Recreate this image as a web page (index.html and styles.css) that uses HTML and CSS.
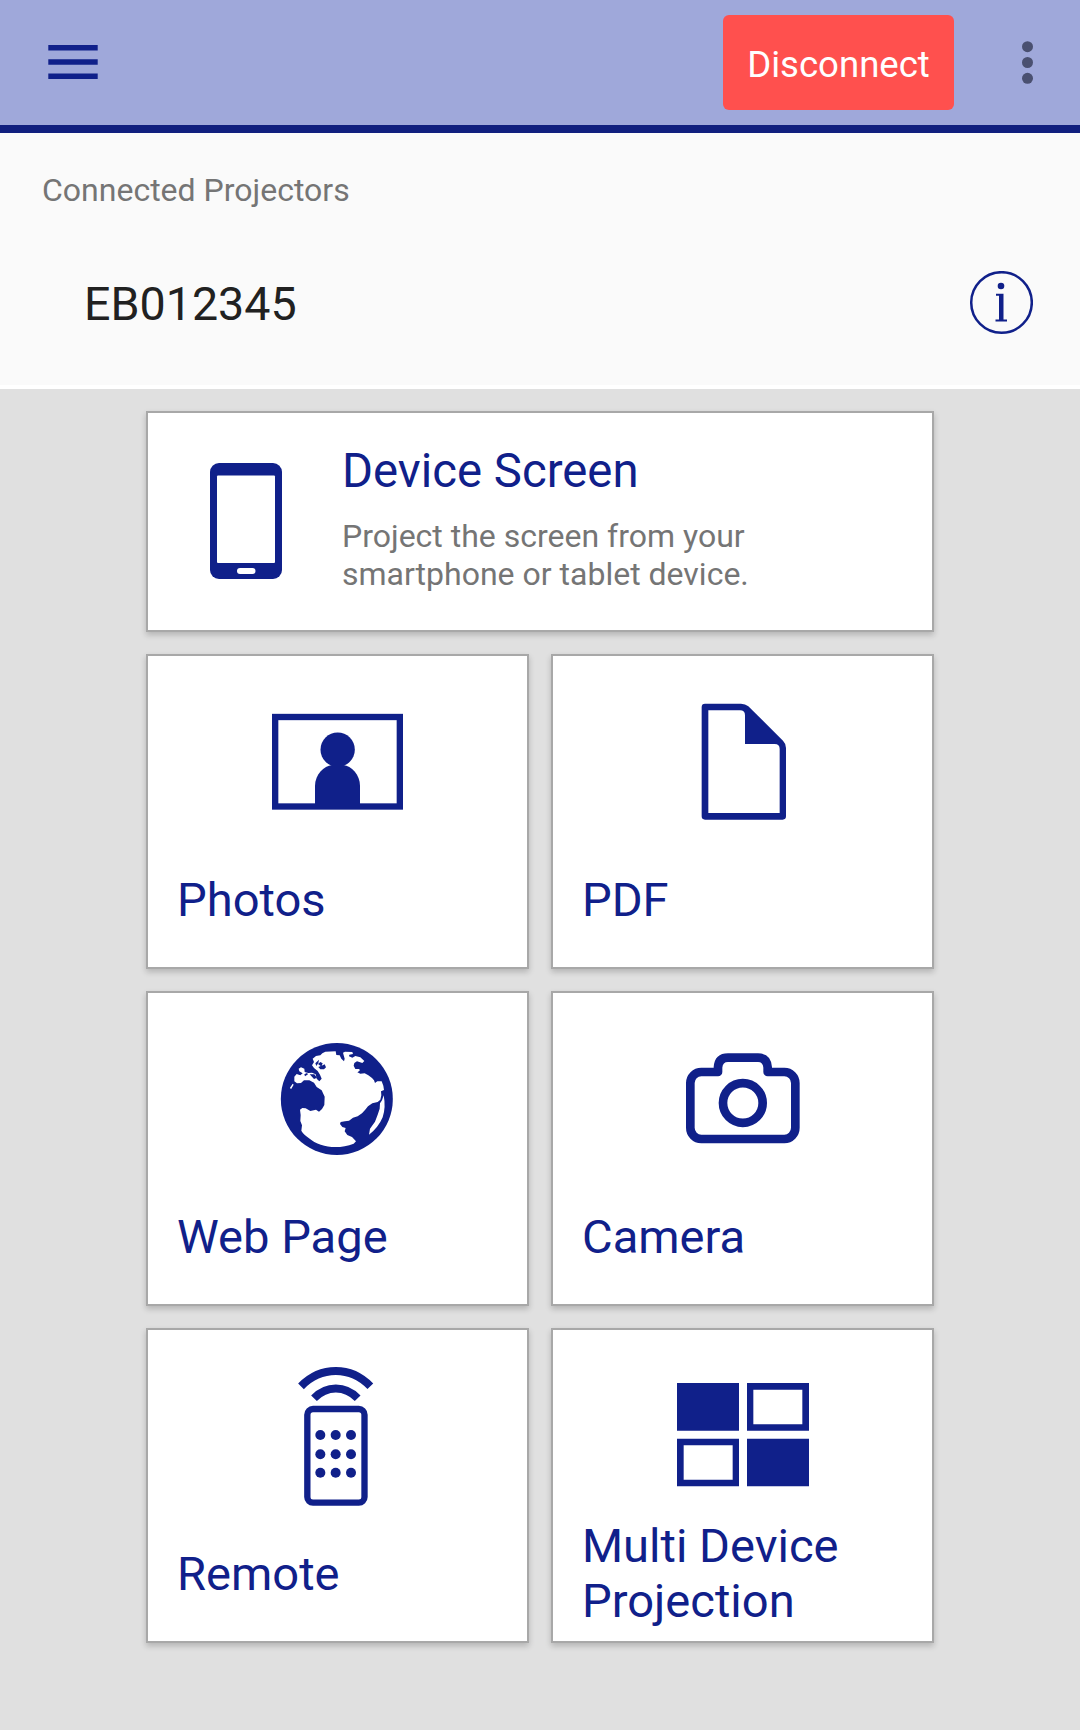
FILE: index.html
```html
<!DOCTYPE html>
<html lang="en">

<head>
  <meta charset="UTF-8">
  <title>Connected Projectors</title>
  <link rel="stylesheet" href="styles.css">
</head>

<body>
  <header class="toolbar">
    <svg class="menu" width="50" height="34" viewBox="0 0 50 34">
      <path d="M.3 0h49.4v5.500H.3zM.3 14.2h49.4v5.500H.3zM.3 28.4h49.4v5.500H.3z" />
    </svg>
    <button class="disconnect">Disconnect</button>
    <svg class="more" width="12" height="44" viewBox="0 0 12 44">
      <circle cx="6.5" cy="6.7" r="5.5" />
      <circle cx="6.5" cy="22.5" r="5.5" />
      <circle cx="6.5" cy="38.3" r="5.5" />
    </svg>
  </header>

  <section class="connected">
    <h2>Connected Projectors</h2>
    <div class="projector">
      <span class="name">EB012345</span>
      <svg class="info" width="64" height="64" viewBox="0 0 64 64">
        <circle cx="32.5" cy="31.5" r="30.3" fill="none" stroke="#10208a" stroke-width="2.5" />
        <circle cx="32" cy="15" r="3.3" />
        <path d="M27 22.7H34.5V48.5h3.5v2H26.5v-2h3.5V24.700h-3z" />
      </svg>
    </div>
  </section>

  <main class="menuGrid">
    <div class="card wide">
      <svg class="phone" width="72" height="116" viewBox="0 0 72 116">
        <rect width="72" height="116" rx="9" />
        <rect x="7" y="12.5" width="58" height="87.5" rx="1" fill="#fff" />
        <rect x="27" y="105" width="18.5" height="6" rx="3" fill="#fff" />
      </svg>
      <div class="text">
        <h3>Device Screen</h3>
        <p>Project the screen from your<br>smartphone or tablet device.</p>
      </div>
    </div>

    <div class="card">
      <svg class="icon" viewBox="375 150 432 432">
        <rect x="405.5" y="231" width="374" height="268.5" fill="none" stroke="#10208a" stroke-width="19" />
        <circle cx="593" cy="329" r="51.5" />
        <path d="M525 495V437C525 404 552 377 576 375H610C634 377 660 404 660 437V495z" />
      </svg>
      <h3>Photos</h3>
    </div>

    <div class="card">
      <svg class="icon" viewBox="390 150 432 432">
        <path fill-rule="evenodd" d="M495 191H603Q616 191 625 199L729 302Q738 311 738 324V529Q738 539 728 539H495Q485 539 485 529V201Q485 191 495 191zM505 211V519H719V327Q719 312 704 312H615V226Q615 211 600 211z" />
      </svg>
      <h3>PDF</h3>
    </div>

    <div class="card">
      <svg class="icon" viewBox="-15 -9 432 432">
        <circle cx="200.5" cy="207" r="168" />
        <!-- continents cut out of the disc -->
        <path fill="#fff" d="M157 70L166 65 197 64 199 75 209 76 214 86 222 94 224 86 221 76 219 68 225 65 247 66 249 72 238 74 237 79 247 83 256 78 271 82 283 93 277 99 261 94 253 99 251 107 256 117 268 117 269 122 262 127 271 131 284 130 295 136 306 144 312 151 315 159 322 154 335 154 340 167 342 180 333 184 334 196 331 209 323 216 307 220 294 229 285 240 276 250 263 259 249 263 237 272 225 274 212 276 210 282 217 291 227 294 224 304 232 315 246 321 258 334 251 341C205 359 149 353 116 324 104 315 98 309 94 302L96 286 91 273 92 255 90 239 97 234 107 235 121 243 138 239 147 245 156 237 163 225 164 200 155 181 140 171 132 158 118 151 102 151 93 159 81 160 73 154 73 140 80 132 91 136 98 130 88 124 86 116 93 112 103 116 104 126 115 129 126 128 137 133 140 146 148 154 155 146 150 134 143 123 132 114 126 106 132 96 128 86 138 78 151 76z" />
        <path d="M151 96L158 100 155 107 164 103 168 112 162 118 151 118 145 111 152 108 144 102zM136 100L147 89 145 99 139 108zM119 133l14 0 8 10-9 4zM103 133l8-4 3 4-9 6z" />
        <path fill="#fff" d="M341 196Q348 232 338 262 325 293 297 314L300 296 315 275 323 254 329 236 330 220 336 211zM68 161l3 3-8 14-3-5z" />
      </svg>
      <h3>Web Page</h3>
    </div>

    <div class="card">
      <svg class="icon" viewBox="390 141 432 432">
        <g fill="none" stroke="#10208a" stroke-width="26" stroke-linejoin="round">
          <path d="M484 276H534V262Q536 233 564 233H654Q681 233 683 262V276H733A33 33 0 0 1 766 309V443A33 34 0 0 1 733 477H484A33 34 0 0 1 451 443V309A33 33 0 0 1 484 276z" />
          <circle cx="608.5" cy="369" r="59.5" />
        </g>
      </svg>
      <h3>Camera</h3>
    </div>

    <div class="card">
      <svg class="icon" viewBox="-15 42 432 432">
        <g fill="none" stroke="#10208a">
          <path d="M93 109C153 48 242 48 301 109" stroke-width="24" />
          <path d="M132 145C170 106 225 106 263 145" stroke-width="24" />
          <rect x="112" y="177" width="171.5" height="281" rx="17" stroke-width="19" />
        </g>
        <circle cx="151" cy="255" r="15" />
        <circle cx="197" cy="255" r="15" />
        <circle cx="243" cy="255" r="15" />
        <circle cx="151" cy="313" r="15" />
        <circle cx="197" cy="313" r="15" />
        <circle cx="243" cy="313" r="15" />
        <circle cx="151" cy="368" r="15" />
        <circle cx="197" cy="368" r="15" />
        <circle cx="243" cy="368" r="15" />
      </svg>
      <h3>Remote</h3>
    </div>

    <div class="card">
      <svg class="icon" viewBox="390 132 432 432">
        <path fill-rule="evenodd" d="M411 189h186v143H411zM621 189h186v143H621zM640 209v104h147V209zM411 356h186v143H411zM431 376v103h147V376zM621 356h186v143H621z" />
      </svg>
      <h3>Multi Device<br>Projection</h3>
    </div>
  </main>
</body>

</html>
```

FILE: styles.css
```css
h2,
h3,
p {
  margin: 0;
  font-weight: 400;
}

body {
  margin: 0;
  min-height: 1730px;
  background-color: #e0e0e0;
  font-family: Roboto, "Liberation Sans", sans-serif;
}

svg {
  display: block;
  flex: none;
  fill: #10208a;
}

.toolbar {
  display: flex;
  align-items: center;
  box-sizing: border-box;
  height: 133px;
  padding: 0 47px 1px 48px;
  border-bottom: 8px solid #101f7e;
  background-color: #9fa8da;
}

.disconnect {
  width: 231px;
  height: 95px;
  margin-left: auto;
  margin-right: 67px;
  padding: 5px 0 0;
  border: 0;
  border-radius: 6px;
  background-color: #ff504e;
  color: #fff;
  font: 36.6px Roboto, "Liberation Sans", sans-serif;
}

.toolbar .more {
  overflow: visible;
  fill: #4a5070;
}

.connected {
  box-sizing: border-box;
  height: 256px;
  padding: 38px 47px 0 42px;
  border-bottom: 4px solid #fff;
  background-color: #fafafa;
}

.connected h2 {
  color: #757575;
  font-size: 32px;
  line-height: 38px;
}

.projector {
  display: flex;
  align-items: center;
  justify-content: space-between;
  height: 64px;
  margin-top: 62px;
  padding-left: 42px;
}

.name {
  padding-top: 2px;
  color: #212121;
  font-size: 46.6px;
}

.menuGrid {
  display: grid;
  grid-template-columns: 383px 383px;
  grid-template-rows: 221px;
  grid-auto-rows: 315px;
  gap: 22px;
  justify-content: center;
  padding-top: 22px;
}

.card {
  display: flex;
  flex-direction: column;
  box-sizing: border-box;
  border: 2px solid #a8a8a8;
  background-color: #fff;
  box-shadow: 0 3px 6px rgba(0, 0, 0, .2);
}

.card h3 {
  color: #10208a;
  font-size: 47.1px;
  line-height: 55px;
}

.icon {
  width: 144px;
  height: 144px;
  margin: 34px 0 0 117px;
}

.icon + h3 {
  display: flex;
  flex: 1;
  align-items: center;
  padding: 0 0 3px 29px;
}

.wide {
  grid-column: span 2;
  flex-direction: row;
  align-items: center;
  padding-left: 62px;
}

.phone {
  margin-bottom: 2px;
}

.wide .text {
  margin-left: 60px;
  padding-bottom: 7px;
}

.wide h3 {
  font-size: 47.3px;
}

.wide p {
  margin-top: 18px;
  color: #757575;
  font-size: 32px;
  line-height: 38px;
}
```
